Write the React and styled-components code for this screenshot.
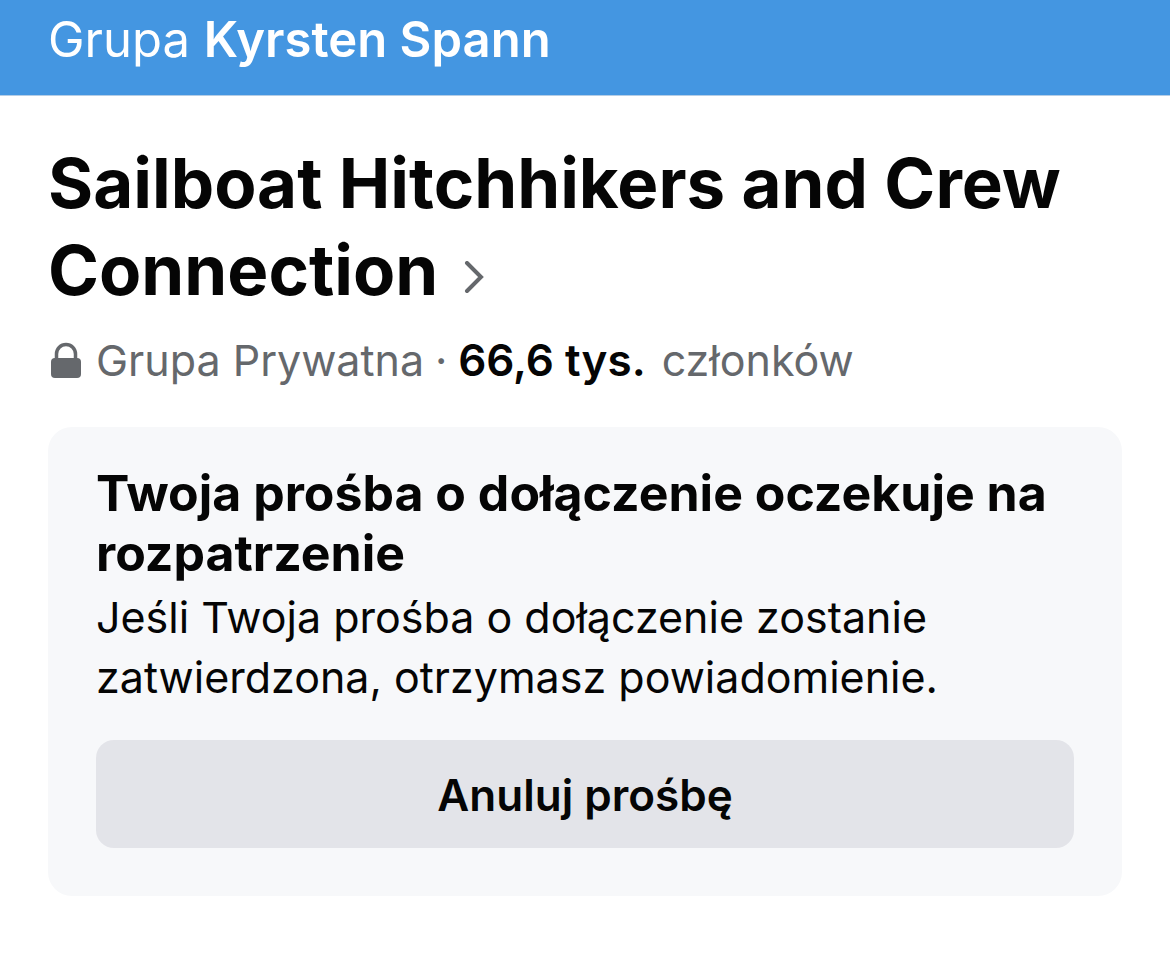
import React from "react";
import styled, { createGlobalStyle } from "styled-components";

const GlobalStyle = createGlobalStyle`
  *, *::before, *::after { box-sizing: border-box; }
  body {
    margin: 0;
    background: #ffffff;
    color: #050505;
    font-family: Inter, "Liberation Sans", sans-serif;
  }
`;

const Banner = styled.header`
  background: #4496e1;
  color: #ffffff;
  padding: 10px 48px 25px;
  border-bottom: 1px solid #b4cde6;
  font-size: 49px;
  line-height: 60px;
  font-weight: 400;
`;

const BannerName = styled.strong`
  font-weight: 600;
`;

const Page = styled.main`
  padding: 44px 48px 74px;
`;

const Title = styled.h1`
  margin: 0;
  font-size: 69px;
  line-height: 87px;
  font-weight: 700;
`;

const TitleLink = styled.a`
  color: inherit;
  text-decoration: none;
`;

const Chevron = styled.svg`
  width: 20px;
  height: 34px;
  margin-left: 26px;
`;

const Meta = styled.p`
  display: flex;
  align-items: center;
  margin: 15px 0 36px;
  color: #65686c;
  font-size: 43px;
  line-height: 62px;
`;

const Lock = styled.svg`
  flex: none;
  width: 36px;
  height: 38px;
  margin-right: 12px;
`;

const Dot = styled.span`
  width: 34px;
  text-align: center;
`;

const MemberCount = styled.strong`
  margin-right: 16px;
  color: #050505;
  font-size: 44px;
  font-weight: 600;
`;

const Card = styled.section`
  padding: 36px 48px 48px;
  border-radius: 24px;
  background: #f7f8fa;
`;

const CardTitle = styled.h2`
  margin: 0;
  font-size: 50px;
  line-height: 60px;
  font-weight: 700;
`;

const CardText = styled.p`
  margin: 4px 0 33px;
  font-size: 43px;
  line-height: 60px;
`;

const CancelButton = styled.button`
  display: block;
  width: 100%;
  height: 108px;
  padding: 2px 24px 0;
  border: 0;
  border-radius: 18px;
  background: #e3e4e9;
  color: #050505;
  font: inherit;
  font-size: 44px;
  font-weight: 600;
  cursor: pointer;
`;

export default function App() {
  return (
    <>
      <GlobalStyle />
      <Banner>
        Grupa <BannerName>Kyrsten Spann</BannerName>
      </Banner>
      <Page>
        <Title>
          <TitleLink href="#group">
            Sailboat Hitchhikers and Crew Connection
            <Chevron viewBox="0 0 20 34" aria-hidden="true">
              <path
                d="M3 2 17 16 3 30"
                fill="none"
                stroke="#65686c"
                strokeWidth="4"
                strokeLinecap="round"
              />
            </Chevron>
          </TitleLink>
        </Title>
        <Meta>
          <Lock viewBox="0 0 36 38" aria-hidden="true">
            <rect x="3" y="17" width="30" height="20" rx="4" fill="#65686c" />
            <path
              d="M8.500 18v-5a9.500 9.500 0 0 1 19 0v5"
              fill="none"
              stroke="#65686c"
              strokeWidth="3.500"
            />
          </Lock>
          <span>Grupa Prywatna</span>
          <Dot>·</Dot>
          <MemberCount>66,6 tys.</MemberCount>
          <span>członków</span>
        </Meta>
        <Card>
          <CardTitle>Twoja prośba o dołączenie oczekuje na rozpatrzenie</CardTitle>
          <CardText>
            Jeśli Twoja prośba o dołączenie zostanie zatwierdzona, otrzymasz powiadomienie.
          </CardText>
          <CancelButton type="button">Anuluj prośbę</CancelButton>
        </Card>
      </Page>
    </>
  );
}
